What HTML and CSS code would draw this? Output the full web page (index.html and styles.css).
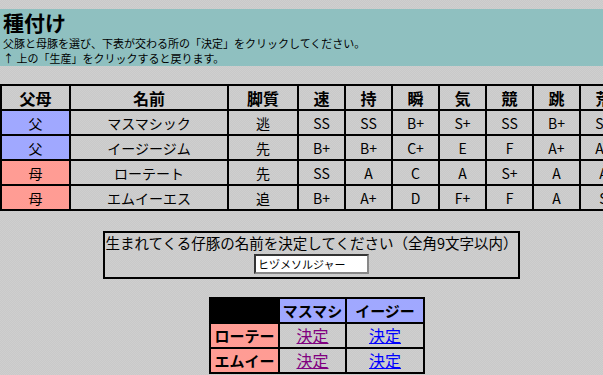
FILE: index.html
```html
<!DOCTYPE html>
<html lang="ja">
<head>
    <meta charset="UTF-8">
    <title>種付け</title>
    <link rel="stylesheet" href="styles.css">
</head>
<body>
    <div class="head-band">
        <h1 class="title">種付け</h1>
        <p class="note">父豚と母豚を選び、下表が交わる所の「決定」をクリックしてください。</p>
        <p class="note">↑ 上の「生産」をクリックすると戻ります。</p>
    </div>

    <div class="page">
        <table class="pig-table">
            <colgroup>
                <col class="c-sex">
                <col class="c-name">
                <col class="c-leg">
                <col class="c-stat"><col class="c-stat"><col class="c-stat">
                <col class="c-stat"><col class="c-stat"><col class="c-stat"><col class="c-stat">
            </colgroup>
            <tr class="head-row">
                <th>父母</th><th>名前</th><th>脚質</th>
                <th>速</th><th>持</th><th>瞬</th><th>気</th><th>競</th><th>跳</th><th>荒</th>
            </tr>
            <tr>
                <td class="father">父</td><td>マスマシック</td><td>逃</td>
                <td>SS</td><td>SS</td><td>B+</td><td>S+</td><td>SS</td><td>B+</td><td>SS</td>
            </tr>
            <tr>
                <td class="father">父</td><td>イージージム</td><td>先</td>
                <td>B+</td><td>B+</td><td>C+</td><td>E</td><td>F</td><td>A+</td><td>A+</td>
            </tr>
            <tr>
                <td class="mother">母</td><td>ローテート</td><td>先</td>
                <td>SS</td><td>A</td><td>C</td><td>A</td><td>S+</td><td>A</td><td>A</td>
            </tr>
            <tr>
                <td class="mother">母</td><td>エムイーエス</td><td>追</td>
                <td>B+</td><td>A+</td><td>D</td><td>F+</td><td>F</td><td>A</td><td>S</td>
            </tr>
        </table>

        <div class="name-box">
            <div class="name-label">生まれてくる仔豚の名前を決定してください（全角9文字以内）</div>
            <input class="name-input" type="text" value="ヒヅメソルジャー">
        </div>

        <table class="cross-table">
            <colgroup>
                <col class="c-mother"><col class="c-first"><col class="c-second">
            </colgroup>
            <tr>
                <th class="corner"></th>
                <th class="father">マスマシ</th>
                <th class="father">イージー</th>
            </tr>
            <tr>
                <th class="mother">ローテー</th>
                <td><a class="visited" href="#">決定</a></td>
                <td><a href="#">決定</a></td>
            </tr>
            <tr>
                <th class="mother">エムイー</th>
                <td><a class="visited" href="#">決定</a></td>
                <td><a href="#">決定</a></td>
            </tr>
        </table>
    </div>
</body>
</html>
```

FILE: styles.css
```css
body {
    margin: 0;
    font-family: "Noto Sans CJK JP", "DejaVu Sans", sans-serif;
    color: #000;
    background: repeating-conic-gradient(#c9c9c9 0 25%, #cfcfcf 0 50%) 0 0 / 2px 2px;
    overflow: hidden;
}

.head-band {
    margin-top: 9px;
    height: 57px;
    background-color: #8fc0c0;
    padding-left: 3px;
    box-sizing: border-box;
}

.title {
    margin: 0;
    font-size: 21px;
    font-weight: bold;
    line-height: 27px;
}

.note {
    margin: 0;
    font-size: 11px;
    line-height: 15px;
}

.page {
    width: 623px;
}

.pig-table {
    margin-top: 18px;
    width: 623px;
    table-layout: fixed;
    border-collapse: collapse;
}

.c-sex { width: 69px; }
.c-name { width: 158px; }
.c-leg { width: 70px; }
.c-stat { width: 47px; }

.pig-table th,
.pig-table td {
    border: 2px solid #000;
    height: 23px;
    padding: 0;
    text-align: center;
    font-size: 14px;
    line-height: 18px;
    white-space: nowrap;
}

.pig-table th {
    font-size: 16px;
}

.father {
    background-color: #a0a8ff;
}

.mother {
    background-color: #ff9c94;
}

.name-box {
    width: 413px;
    margin: 20px auto 0;
    border: 2px solid #000;
    text-align: center;
    padding-bottom: 3px;
}

.name-label {
    font-size: 14.5px;
    line-height: 20px;
    white-space: nowrap;
}

.name-input {
    display: block;
    margin: 1px auto 0;
    width: 115px;
    height: 20px;
    box-sizing: border-box;
    font-family: "Noto Sans CJK JP", sans-serif;
    font-size: 11px;
    padding: 0 2px;
    border: 2px inset #888;
    background: #fff;
}

.cross-table {
    margin: 18px 0 0 209px;
    border-collapse: collapse;
    table-layout: fixed;
    width: 214px;
}

.c-mother { width: 69px; }
.c-first { width: 67px; }
.c-second { width: 78px; }

.cross-table th,
.cross-table td {
    border: 2px solid #000;
    height: 23px;
    padding: 0;
    font-size: 15px;
    line-height: 18px;
    text-align: center;
    white-space: nowrap;
    overflow: hidden;
}

.cross-table .corner {
    background-color: #000;
}

.cross-table a {
    color: #0000ff;
    font-size: 16px;
}

.cross-table a.visited {
    color: #800080;
}
```
